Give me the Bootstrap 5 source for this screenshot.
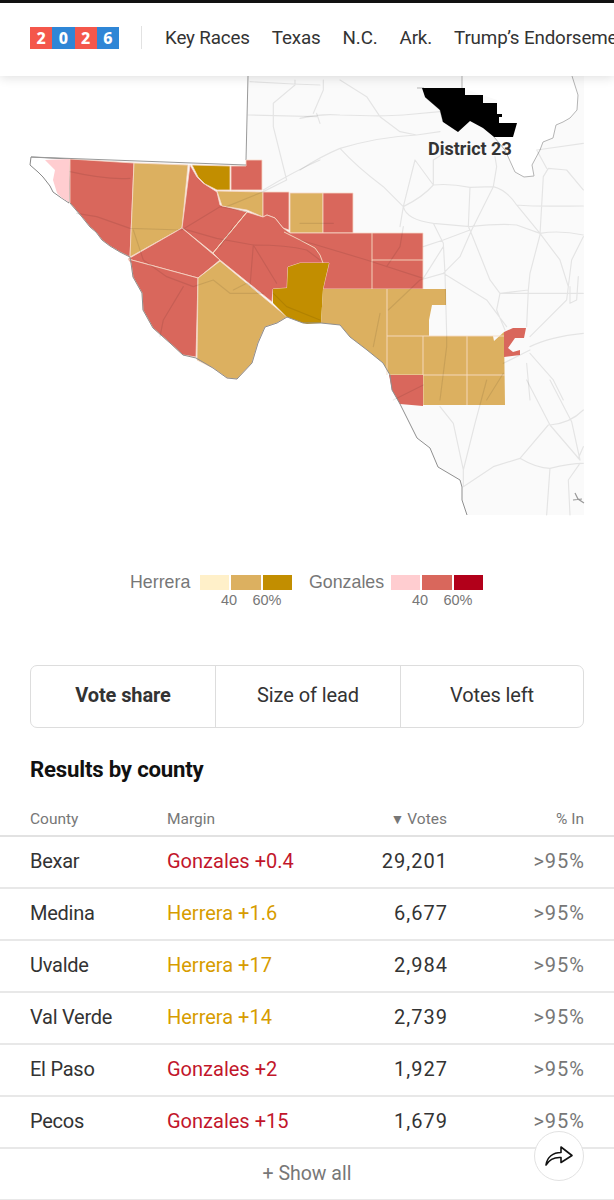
<!DOCTYPE html>
<html lang="en">
<head>
<meta charset="utf-8">
<title>District 23 results</title>
<link rel="stylesheet" href="https://cdn.jsdelivr.net/npm/bootstrap@5.3.0/dist/css/bootstrap.min.css">
<style>
html,body{background:#fff}
body{width:614px;height:1200px;overflow:hidden;font-family:Roboto,"Liberation Sans",sans-serif;color:#333;position:relative}
.top-strip{height:76px;border-top:3px solid #111;background:#fff;box-shadow:0 2px 10px rgba(0,0,0,.12);position:relative;z-index:2;padding:0 0 4px 30px;white-space:nowrap;overflow:hidden}
.logo-box{display:flex;width:89px;height:22px;flex:none}
.logo-box span{flex:1;display:flex;align-items:center;justify-content:center;color:#fff;font-weight:800;font-size:16px;font-family:"Noto Sans",sans-serif}
.l-red{background:#f4574b}.l-blue{background:#2f86d6}
.head-sep{width:1px;height:23px;background:#e2e2e2;margin:0 23px 0 22px;flex:none}
.head-links{display:flex;gap:22px;font-size:18.8px;letter-spacing:-.15px;color:#333;padding-top:2px}
.map-svg{display:block;width:614px;height:464px}
.legend-wrap{height:125px;font-family:"Liberation Sans",sans-serif;color:#777;padding:35px 0 0 130px}
.legend-name{font-size:17.8px;line-height:15px;height:17px}
.name-h{width:70px}
.name-g{width:82px;margin-left:17px}
.ramp{display:flex;gap:2px;width:92px}
.ramp i{display:block;flex:1;height:15px}
.ramp-ticks{position:relative;height:16px;font-size:14.5px;line-height:20px;width:92px}
.ramp-ticks b{font-weight:400;position:absolute;top:0;transform:translateX(-50%)}
.seg-wrap{margin:0 30px;height:63px;width:554px;border:1px solid #ddd;border-radius:7px;overflow:hidden}
.seg-wrap .btn{flex:none;width:185px;margin:0;border:0;border-radius:0;font-size:20px;color:#333;border-left:1px solid #ddd;padding:0 0 3px;letter-spacing:-.1px}
.seg-wrap.seg-wrap.seg-wrap.seg-wrap .btn:not(:first-child){margin-left:0}
.seg-wrap .btn:first-child{border-left:0;width:184px;font-weight:700}
.seg-wrap .btn:last-child{width:183px}
.res-title{font-size:22.2px;font-weight:700;color:#111;margin:27px 30px 0;height:28px;line-height:28px;letter-spacing:-.2px}
.res-table{margin:21px 0 0;width:614px;table-layout:fixed}
.res-table th{font-weight:400;color:#777;font-size:15.5px;height:32px;padding:0 0 4px;border-bottom:2px solid #e2e2e2;vertical-align:bottom}
.res-table td{font-size:20px;height:52px;padding:0 0 2px;border-bottom:2px solid #e8e8e8;vertical-align:middle;color:#333}
.res-table .c1{padding-left:30px;width:167px}
.res-table td.c1{letter-spacing:-.25px}
.res-table .c2{width:190px}
.res-table .c3{width:91px;text-align:right}
.res-table .c4{padding-right:30px;text-align:right;width:166px}
.res-table td.c3,.res-table td.c4{letter-spacing:1px}
.res-table td.c4{color:#777;padding-right:29px}
.res-table th.c3{padding-right:1px}
.res-table td.m-r{color:#c2162b}
.res-table td.m-h{color:#d79c00}
.sort-mark{font-size:14px;margin-right:3px}
.show-row{height:52px;display:flex;align-items:center;justify-content:center;color:#777;font-size:19.5px;border-bottom:2px solid #e8e8e8}
.share-btn{position:absolute;left:534px;top:1131px;width:50px;height:50px;border-radius:50%;background:#fff;border:1px solid #e2e2e2;z-index:3;display:flex;align-items:center;justify-content:center;padding:0}
.road{fill:none;stroke:#000;stroke-opacity:.085;stroke-width:3.6;stroke-linejoin:round;stroke-linecap:round}
.cty{stroke:#f6d8c8;stroke-width:.8;stroke-linejoin:round}
.tan{fill:#dcb060}.red{fill:#d9675c}.dark{fill:#c28e00}.pale{fill:#ffcdd0}
.inner{fill:none;stroke:#f6dcc4;stroke-width:.9}
.district-label{font:700 18px Roboto,sans-serif;fill:#333}
</style>
</head>
<body>
<header class="top-strip d-flex align-items-center">
  <div class="logo-box"><span class="l-red">2</span><span class="l-blue">0</span><span class="l-red">2</span><span class="l-blue">6</span></div>
  <div class="head-sep"></div>
  <nav class="head-links"><span>Key Races</span><span>Texas</span><span>N.C.</span><span>Ark.</span><span>Trump’s Endorsements</span></nav>
</header>

<svg class="map-svg" viewBox="0 76 614 464" xmlns="http://www.w3.org/2000/svg">
  <!-- land -->
  <path fill="#fafafa" d="M248 76H584V515H467L462 500 462 487 460 480 438 467 430 448 417 438 408 420 400 404 392 390 390 375 383 363 367 350 350 337 340 325 321 323 303 323 287 317 277 323 265 327 258 343 252 363 237 379 227 378 213 368 196 358 183 355 170 343 153 328 143 310 142 293 133 277 131 263 130 257 120 252 110 246 102 240 96 232 90 227 82 217 70 203 70 159 246 165Z"/>
  <path fill="#fff" d="M462 76H572L578 95 577 110 570 118 563 122 556 125 553 138 543 142 540 150 532 165 534 176 524 177 515 172 505 150 494 137 497 100 462 88Z"/>
  <path fill="none" stroke="#999" stroke-width="1" d="M248 76 246 160"/>
  <path fill="none" stroke="#b5b5b5" stroke-width="1" d="M462 76V88M417 88H424M425 97 440 110 443 122M494 137 505 150 515 172 524 177 534 176 532 165 540 150 543 142 553 138 556 125 563 122 570 118 577 110 578 95 572 76"/>
  <!-- counties -->
  <path fill="#fff" stroke="#888" stroke-width="1" d="M31 157 30 165 38 172 43 177 50 186 53 192 60 197 69 203 70 159Z"/>
  <path class="pale" d="M45 160 70 159 69 202 62 198 57 193 53 180 55 170Z"/>
  <path class="cty red" d="M70 159 134 163 130 257 120 252 110 246 102 240 96 232 90 227 82 217 70 203Z"/>
  <path class="cty tan" d="M134 163 188 165 182 228 130 257Z"/>
  <path class="cty red" d="M190 165 197 177 203 183 217 192 220 205 247 212 213 253 182 228Z"/>
  <path class="cty dark" d="M192 165 230 166V190H217L205 184 198 177Z"/>
  <path class="cty red" d="M231 166 246 166 246 160 262 160 262 190 231 190Z"/>
  <path class="cty tan" d="M217 191 263 192 263 217 247 210 222 206Z"/>
  <path class="cty red" d="M263 192H289V230L283 228 275 218 267 215 263 217Z"/>
  <path class="cty tan" d="M290 193H323V233H290Z"/>
  <path class="cty red" d="M323 193H353V233H323Z"/>
  <path class="cty red" d="M247 212 263 217 267 215 275 218 283 228 290 233H423V289H323L325 280 329 263H300L288 267 287 288 273 289 272 302 220 260 213 253Z"/>
  <path class="inner" d="M284 232 300 240 315 248 320 255 323 263M372 233V289M372 260H423M247 212 213 253"/>
  <path class="cty red" d="M182 228 220 260 198 278 128 259Z"/>
  <path class="cty red" d="M128 259 198 278 196 357 183 355 170 343 153 328 143 310 142 293 133 277 131 263Z"/>
  <path class="cty tan" d="M198 278 220 261 287 317 277 323 265 327 258 343 252 363 237 379 227 378 213 368 197 360Z"/>
  <path class="dark" d="M273 289 287 288 288 267 300 263H329L325 280 323 289 321 323 307 324 303 323 287 317 273 303Z"/>
  <path class="tan" d="M323 289H446V305H432L429 320V336H493L494 341 504 332 505 405H423V375H390L383 363 367 350 350 337 340 325 321 323Z"/>
  <path class="inner" d="M387 289V375M387 336H504M423 336V405M467 336V405M390 375H505"/>
  <path class="red" d="M389 375H423V406L400 404 392 390Z"/>
  <path class="red" d="M504 332 513 328H526L524 338 515 338 508 348 513 352 520 350 520 355 504 357Z"/>
  <!-- Rio Grande edge -->
  <path fill="none" stroke="#8f8f8f" stroke-width="1" d="M70 203 82 217 90 227 96 232 102 240 110 246 120 252 130 257 131 263 133 277 142 293 143 310 153 328 170 343 183 355 196 358 213 368 227 378 237 379 252 363 258 343 265 327 277 323 287 317 303 323 321 323 340 325 350 337 367 350 383 363 390 375 392 390 400 404 408 420 417 438 430 448 438 467 460 480 462 487 462 500 467 515"/>
  <path fill="none" stroke="#999" stroke-width="1" d="M31 157 246 165"/>
  <!-- roads: west part -->
  <g transform="translate(20 80) scale(.3333)">
    <path class="road" d="M690 5 820 12 900 15M825 0V15L760 70V140L800 300 730 335 620 380M685 105 890 110M900 240Q830 270 730 330M890 100 900 130M150 275Q260 300 330 295M170 400 230 410 330 445 485 450 600 380 680 395M485 445 590 475 700 495Q800 495 860 510L900 540M640 440 600 500M700 495 690 620M700 495 770 610M340 450 370 540 440 590 520 620 580 600 630 640 730 640M490 620 430 720 420 770M640 630 680 610 720 640M760 640 800 680 900 720"/>
  </g>
  <!-- roads: east part -->
  <g transform="translate(300 80) scale(.3333)">
    <path class="road" d="M0 115Q60 100 120 105 250 110 310 105L420 95M120 0 200 50 240 110 300 155 350 165M0 270Q60 230 120 205 240 170 350 165L420 155M120 205Q170 260 250 320L310 380 300 440M310 380Q370 350 400 315 450 310 510 322L580 320Q620 330 650 375 700 380 850 378M400 315 345 240 310 380M400 315V240L440 215M510 322 505 440 510 450M580 320 590 260 585 230M580 320 515 450 480 530 430 580M310 380Q320 420 400 430L430 490 435 580 440 760V800L420 960M400 430 510 440Q600 430 650 435L720 460Q780 450 850 465M650 375 720 460 780 540 805 620M510 450 570 600 600 640 685 630 690 580 720 465 730 290 745 265 800 270 850 330M430 580 560 660 620 740M430 580 360 600 265 690M0 480 200 540 370 595 430 500M370 500 430 480 510 450M260 560 300 500 310 440M600 640 590 690 615 750M685 630 680 740M690 770 800 660 815 540 850 470M600 640H850M810 620V670L830 660 835 590M690 800Q750 770 850 760M690 820 760 900 790 960M680 850 690 960M610 850Q650 830 690 810M560 960 610 880M370 915 280 960M0 430H100M40 100 70 30V0M240 700 220 800M740 265 710 210 850 190"/>
  </g>
  <!-- roads: south part -->
  <g transform="translate(380 380) scale(.3333)">
    <path class="road" d="M440 0 510 135 600 240M510 0 575 125 600 240M505 135 420 235 340 260 250 320M420 235Q470 265 510 265 570 250 610 250M510 135Q570 130 610 90M510 265 500 405M600 250 565 300 570 405M610 200 595 235M180 80 220 130 250 270V320M320 0 285 130 250 270"/>
  </g>
  <path fill="#000" d="M422 88H465V95H483V103H497V114H502V117H499V123H517L513 137H494L483 128 470 121 458 132 443 122 440 110 425 97Z"/>
  <path fill="none" stroke="#999" stroke-width="1.2" d="M575 493 578 499 584 503M573 500 582 499"/>
  <text class="district-label" x="428" y="155">District 23</text>
</svg>

<section class="legend-wrap d-flex">
  <span class="legend-name name-h">Herrera</span>
  <div>
    <div class="ramp"><i style="background:#fff0c9"></i><i style="background:#dcb060"></i><i style="background:#c28e00"></i></div>
    <div class="ramp-ticks"><b style="left:29px">40</b><b style="left:67px">60%</b></div>
  </div>
  <span class="legend-name name-g">Gonzales</span>
  <div>
    <div class="ramp"><i style="background:#ffcdd0"></i><i style="background:#d9675c"></i><i style="background:#b2001a"></i></div>
    <div class="ramp-ticks"><b style="left:29px">40</b><b style="left:67px">60%</b></div>
  </div>
</section>

<div class="seg-wrap btn-group d-flex" role="group">
  <button type="button" class="btn">Vote share</button>
  <button type="button" class="btn">Size of lead</button>
  <button type="button" class="btn">Votes left</button>
</div>

<h2 class="res-title">Results by county</h2>

<table class="table res-table mb-0">
  <thead><tr><th class="c1">County</th><th class="c2">Margin</th><th class="c3"><span class="sort-mark">▼</span>Votes</th><th class="c4">% In</th></tr></thead>
  <tbody>
    <tr><td class="c1">Bexar</td><td class="c2 m-r">Gonzales +0.4</td><td class="c3">29,201</td><td class="c4">&gt;95%</td></tr>
    <tr><td class="c1">Medina</td><td class="c2 m-h">Herrera +1.6</td><td class="c3">6,677</td><td class="c4">&gt;95%</td></tr>
    <tr><td class="c1">Uvalde</td><td class="c2 m-h">Herrera +17</td><td class="c3">2,984</td><td class="c4">&gt;95%</td></tr>
    <tr><td class="c1">Val Verde</td><td class="c2 m-h">Herrera +14</td><td class="c3">2,739</td><td class="c4">&gt;95%</td></tr>
    <tr><td class="c1">El Paso</td><td class="c2 m-r">Gonzales +2</td><td class="c3">1,927</td><td class="c4">&gt;95%</td></tr>
    <tr><td class="c1">Pecos</td><td class="c2 m-r">Gonzales +15</td><td class="c3">1,679</td><td class="c4">&gt;95%</td></tr>
  </tbody>
</table>
<div class="show-row">+ Show all</div>

<button type="button" class="share-btn" aria-label="Share">
  <svg width="30" height="24" viewBox="0 0 30 24"><path fill="none" stroke="#111" stroke-width="1.6" stroke-linejoin="round" stroke-linecap="round" d="M2 21C3 13 9 8.5 17 8.5V3L28 11.5 17 18.5V13.5C10 13 5 16 2 21Z"/></svg>
</button>
<script src="https://cdn.jsdelivr.net/npm/bootstrap@5.3.0/dist/js/bootstrap.bundle.min.js"></script>
</body>
</html>
